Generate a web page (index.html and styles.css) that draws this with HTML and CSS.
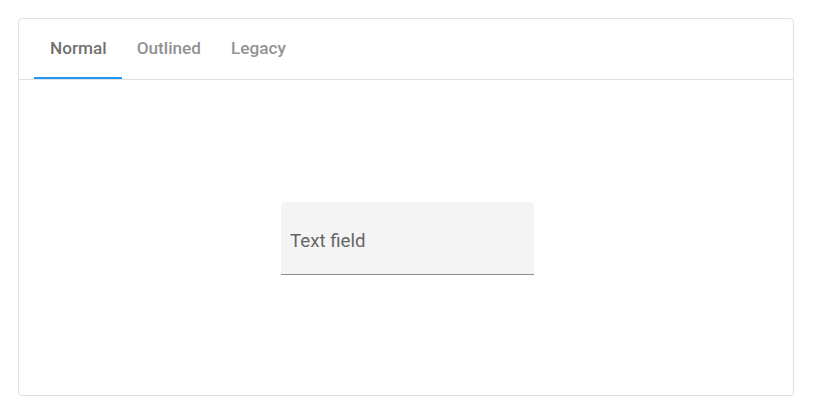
FILE: index.html
```html
<!DOCTYPE html>
<html>
<head>
<meta charset="utf-8">
<link rel="stylesheet" href="styles.css">
</head>
<body>
<div class="card">
  <div class="tabs">
    <div class="tab active">Normal</div>
    <div class="tab">Outlined</div>
    <div class="tab">Legacy</div>
  </div>
  <div class="content">
    <div class="field">
      <span class="label">Text field</span>
    </div>
  </div>
</div>
</body>
</html>
```
FILE: styles.css
```css
html, body {
  margin: 0;
  padding: 0;
  background: #fff;
}
body {
  padding: 18px;
  font-family: Roboto, "Liberation Sans", sans-serif;
}
.card {
  box-sizing: border-box;
  width: 776px;
  height: 378px;
  border: 1px solid #e0e0e0;
  border-radius: 4px;
  display: flex;
  flex-direction: column;
}
.tabs {
  display: flex;
  height: 60px;
  padding-left: 15px;
  border-bottom: 1px solid #e0e0e0;
}
.tab {
  box-sizing: border-box;
  padding: 0 15px 1px 16px;
  display: flex;
  align-items: center;
  font-size: 17.2px;
  font-weight: 500;
  color: #929292;
  border-bottom: 2px solid transparent;
}
.tab + .tab {
  padding-left: 15px;
}
.tab.active {
  color: #727272;
  border-bottom-color: #2196f3;
}
.content {
  flex: 1;
  display: flex;
  align-items: center;
  justify-content: center;
  padding: 2px 0 0 3px;
}
.field {
  box-sizing: border-box;
  width: 253px;
  height: 73px;
  background: #f4f4f4;
  border-radius: 4px 4px 0 0;
  border-bottom: 1px solid #8c8c8c;
  display: flex;
  align-items: center;
  padding: 5px 9px 0;
}
.label {
  font-size: 18.7px;
  color: #666;
}
```
